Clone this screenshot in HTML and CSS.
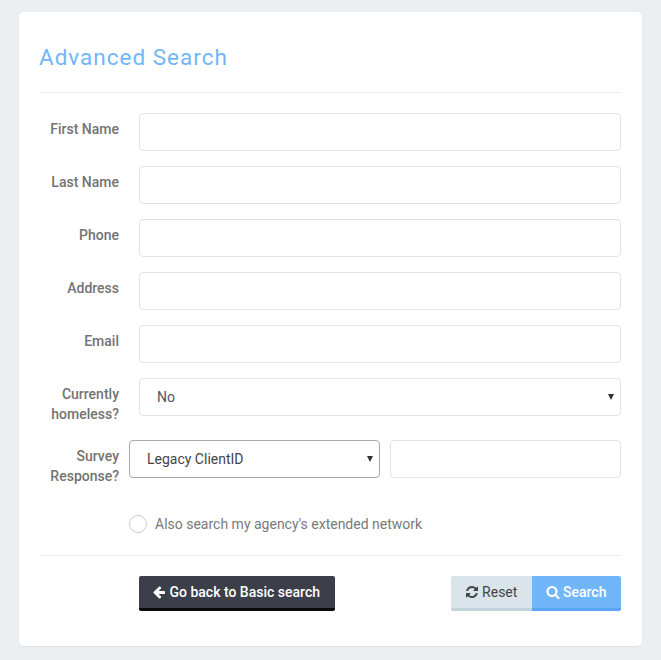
FILE: index.html
```html
<!DOCTYPE html>
<html>
<head>
    <title>Advanced Search</title>
    <link rel="stylesheet" href="styles.css">
</head>
<body>
    <div class="card">
        <h4 class="card-title">Advanced Search</h4>
        <hr class="rule rule-top">

        <form>
            <div class="form-row">
                <label class="row-label" for="firstName">First Name</label>
                <input class="field" type="text" id="firstName">
            </div>
            <div class="form-row">
                <label class="row-label" for="lastName">Last Name</label>
                <input class="field" type="text" id="lastName">
            </div>
            <div class="form-row">
                <label class="row-label" for="phone">Phone</label>
                <input class="field" type="text" id="phone">
            </div>
            <div class="form-row">
                <label class="row-label" for="address">Address</label>
                <input class="field" type="text" id="address">
            </div>
            <div class="form-row">
                <label class="row-label" for="email">Email</label>
                <input class="field" type="text" id="email">
            </div>
            <div class="form-row">
                <label class="row-label" for="homeless">Currently homeless?</label>
                <div class="select-wrap">
                    <select class="field field-select" id="homeless">
                        <option>No</option>
                        <option>Yes</option>
                    </select>
                </div>
            </div>
            <div class="form-row survey-row">
                <label class="row-label" for="survey">Survey Response?</label>
                <div class="select-wrap survey-wrap">
                    <select class="field field-select survey-select" id="survey">
                        <option>Legacy ClientID</option>
                    </select>
                </div>
                <input class="field survey-input" type="text">
            </div>

            <label class="network-row">
                <input class="radio" type="radio">
                <span>Also search my agency's extended network</span>
            </label>

            <hr class="rule rule-bottom">

            <div class="button-row">
                <button class="btn btn-dark" type="button">
                    <svg class="icon" viewBox="0 0 1792 1792"><path d="M1664 896v128q0 53-32.500 90.500t-84.500 37.500h-704l293 294q38 36 38 90t-38 90l-75 76q-37 37-90 37-52 0-91-37l-651-652q-37-37-37-90 0-52 37-91l651-650q38-38 91-38 52 0 90 38l75 74q38 38 38 91t-38 91l-293 293h704q52 0 84.500 37.500t32.500 90.500z"/></svg>
                    Go back to Basic search
                </button>
                <div class="button-group">
                    <button class="btn btn-reset" type="reset">
                        <svg class="icon" viewBox="0 0 1792 1792"><path d="M1639 1056q0 5-1 7-64 268-268 434.500t-478 166.500q-146 0-282.500-55t-243.500-157l-129 129q-19 19-45 19t-45-19-19-45v-448q0-26 19-45t45-19h448q26 0 45 19t19 45-19 45l-137 137q71 66 161 102t187 36q134 0 250-65t186-179q11-17 53-117 8-23 30-23h192q13 0 22.500 9.500t9.500 22.500zm25-800v448q0 26-19 45t-45 19h-448q-26 0-45-19t-19-45 19-45l138-138q-148-137-349-137-134 0-250 65t-186 179q-11 17-53 117-8 23-30 23h-199q-13 0-22.500-9.500t-9.500-22.500v-7q65-268 270-434.500t480-166.500q146 0 284 55.500t245 156.500l130-129q19-19 45-19t45 19 19 45z"/></svg>
                        Reset
                    </button>
                    <button class="btn btn-search" type="button">
                        <svg class="icon" viewBox="0 0 1792 1792"><path d="M1216 832q0-185-131.500-316.500t-316.500-131.500-316.500 131.500-131.500 316.500 131.500 316.500 316.500 131.500 316.500-131.500 131.500-316.500zm512 832q0 52-38 90t-90 38q-54 0-90-38l-343-342q-179 124-399 124-143 0-273.500-55.500t-225-150-150-225-55.500-273.500 55.500-273.500 150-225 225-150 273.500-55.500 273.500 55.500 225 150 150 225 55.500 273.500q0 220-124 399l343 343q37 37 37 90z"/></svg>
                        Search
                    </button>
                </div>
            </div>
        </form>
    </div>
</body>
</html>
```

FILE: styles.css
```css
* {
    box-sizing: border-box;
}
body {
    margin: 0;
    padding: 12px 19px 14px;
    background-color: #ebeff2;
    font-family: Roboto, Arial, sans-serif;
    font-size: 14px;
    line-height: 20px;
    color: #797979;
}
.card {
    background-color: white;
    border-radius: 5px;
    padding: 30px 21px 35px;
    box-shadow: 0 1px 2px rgba(0, 0, 0, 0.06);
}
.card-title {
    margin: 0 0 20px -1px;
    font-size: 22.5px;
    line-height: 30px;
    font-weight: 400;
    letter-spacing: 1px;
    color: #71b6f9;
}
.rule {
    height: 1px;
    margin: 0;
    border: none;
    background-color: #eeeeee;
}
.rule-top {
    margin-bottom: 20px;
}
.form-row {
    display: flex;
    align-items: flex-start;
    gap: 20px;
    margin-bottom: 15px;
}
.row-label {
    flex: none;
    width: 79px;
    padding-top: 6px;
    padding-bottom: 1px;
    text-align: right;
    font-weight: 500;
    color: #737373;
}
.field {
    flex: 1;
    min-width: 0;
    height: 38px;
    padding: 0 17px;
    border: 1px solid #e3e3e3;
    border-radius: 4px;
    background-color: white;
    font-family: inherit;
    font-size: 14px;
    color: #4c5667;
}
.field-select {
    appearance: none;
    display: block;
    width: 100%;
}
.select-wrap {
    position: relative;
    flex: 1;
    min-width: 0;
}
.select-wrap::after {
    content: "";
    position: absolute;
    top: 16px;
    right: 7px;
    border-top: 6px solid #333333;
    border-left: 3px solid transparent;
    border-right: 3px solid transparent;
}
.survey-row {
    gap: 10px;
    margin-bottom: 27px;
}
.survey-wrap {
    flex: none;
    width: 251px;
}
.survey-select {
    border-color: #a9a9a9;
    color: #444444;
}
.network-row {
    display: flex;
    align-items: center;
    gap: 8px;
    margin-left: 89px;
    margin-bottom: 21px;
    height: 20px;
}
.radio {
    appearance: none;
    width: 18px;
    height: 18px;
    margin: 0;
    border: 1px solid #cccccc;
    border-radius: 50%;
    background-color: white;
}
.button-row {
    display: flex;
    justify-content: space-between;
    margin-top: 20px;
    padding-left: 99px;
}
.button-group {
    display: flex;
}
.btn {
    height: 35px;
    padding: 0 15px 0 13px;
    border: none;
    border-bottom: 3px solid transparent;
    border-radius: 2px;
    font-family: inherit;
    font-size: 14px;
    font-weight: 500;
    white-space: nowrap;
    cursor: pointer;
}
.icon {
    width: 14px;
    height: 14px;
    vertical-align: -2px;
    fill: currentColor;
}
.btn-dark {
    background-color: #3c3f4a;
    border-bottom-color: #0a0a0e;
    color: white;
}
.btn-reset {
    width: 81px;
    padding: 0 1px 0 0;
    background-color: #dae4eb;
    border-bottom-color: #c3d3de;
    border-radius: 2px 0 0 2px;
    color: #444444;
    font-weight: 400;
}
.btn-search {
    width: 89px;
    padding: 0 1px 0 0;
    background-color: #71b6f9;
    border-bottom-color: #58a6f5;
    border-radius: 0 2px 2px 0;
    color: white;
}
```
